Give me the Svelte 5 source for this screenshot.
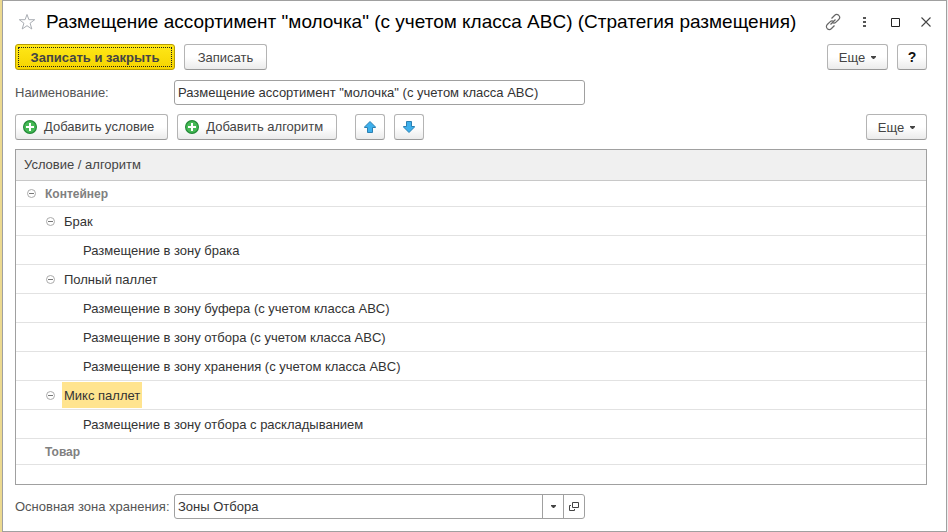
<script>
	let name = $state('Размещение ассортимент "молочка" (с учетом класса ABC)');
	let zone = $state('Зоны Отбора');
	let selected = $state(7);

	let rows = $state([
		{ id: 1, level: 0, text: 'Контейнер', group: true, open: true },
		{ id: 2, level: 1, text: 'Брак', parent: 1, open: true },
		{ id: 3, level: 2, text: 'Размещение в зону брака', parent: 2 },
		{ id: 4, level: 1, text: 'Полный паллет', parent: 1, open: true },
		{ id: 5, level: 2, text: 'Размещение в зону буфера (с учетом класса ABC)', parent: 4 },
		{ id: 6, level: 2, text: 'Размещение в зону отбора (с учетом класса ABC)', parent: 4 },
		{ id: 8, level: 2, text: 'Размещение в зону хранения (с учетом класса ABC)', parent: 4 },
		{ id: 7, level: 1, text: 'Микс паллет', parent: 1, open: true },
		{ id: 9, level: 2, text: 'Размещение в зону отбора с раскладыванием', parent: 7 },
		{ id: 10, level: 0, text: 'Товар', group: true }
	]);

	function isVisible(row) {
		if (!row.parent) return true;
		const parent = rows.find((r) => r.id === row.parent);
		return parent.open && isVisible(parent);
	}
</script>

{#snippet plus()}
	<svg class="plus" width="16" height="16" viewBox="0 0 16 16" aria-hidden="true">
		<circle cx="8" cy="8" r="6.4" fill="#45b955" stroke="#238a38" stroke-width="1.2" />
		<path d="M8 4v8M4 8h8" stroke="#fff" stroke-width="2" />
	</svg>
{/snippet}

{#snippet caret()}
	<svg class="caret" width="5" height="3" viewBox="0 0 5 3" aria-hidden="true">
		<path d="M0 0h5v1L3 3H2L0 1z" fill="#444" />
	</svg>
{/snippet}

<div class="desktop">
	<main class="window">
		<header>
			<button class="icon star" aria-label="В избранное">
				<svg width="18" height="18" viewBox="0 0 18 18">
					<path d="M9 1.5l1.900 5.200h5.800l-4.600 3.500 1.700 5.800L9 12.700 4.200 16l1.700-5.800L1.300 6.700h5.800z" fill="#fff" stroke="#a9adb3" />
				</svg>
			</button>
			<h1>Размещение ассортимент "молочка" (с учетом класса ABC) (Стратегия размещения)</h1>
			<div class="controls">
				<button class="icon" aria-label="Получить ссылку">
					<svg width="18" height="18" viewBox="0 0 18 18" fill="none" stroke="#666" stroke-width="1.2">
						<path d="M7.500 5.500l3-3c1.200-1.200 3-1.200 4.200-.2 1.200 1.200 1.200 3 0 4.200l-2.700 2.700c-1.100 1.100-2.600 1.200-3.700.4" />
						<path d="M10.500 12.500l-3 3c-1.200 1.200-3 1.200-4.200.2-1.200-1.200-1.200-3 0-4.200l2.700-2.700c1.100-1.100 2.600-1.200 3.700-.4" />
						<path d="M6.500 11.500l5-5" />
					</svg>
				</button>
				<button class="icon" aria-label="Меню">
					<svg width="18" height="18" viewBox="0 0 18 18" fill="#555">
						<path d="M8 4h3v2H8zM8 8h3v2H8zM8 12h3v2H8z" />
					</svg>
				</button>
				<button class="icon" aria-label="Развернуть">
					<svg width="18" height="18" viewBox="0 0 18 18">
						<path d="M5.500 5.500h8v8h-8z" fill="none" stroke="#222" />
					</svg>
				</button>
				<button class="icon" aria-label="Закрыть">
					<svg width="18" height="18" viewBox="0 0 18 18">
						<path d="M4.500 4.500l9 9M13.500 4.500l-9 9" stroke="#444" stroke-width="1.100" />
					</svg>
				</button>
			</div>
		</header>

		<div class="content">
			<div class="bar">
				<button class="btn primary">Записать и закрыть</button>
				<button class="btn save">Записать</button>
				<button class="btn more">Еще {@render caret()}</button>
				<button class="btn square help">?</button>
			</div>

			<div class="field name">
				<label for="name">Наименование:</label>
				<input id="name" class="box" type="text" bind:value={name} />
			</div>

			<div class="bar">
				<button class="btn add">{@render plus()}Добавить условие</button>
				<button class="btn add">{@render plus()}Добавить алгоритм</button>
				<div class="arrows">
					<button class="btn square" aria-label="Переместить вверх">
						<svg width="14" height="14" viewBox="0 0 14 14">
							<path d="M7 1.500L12.500 7V7.500H9.500V12.500H4.500V7.500H1.500V7z" fill="#3eb0ec" stroke="#2b80b2" />
						</svg>
					</button>
					<button class="btn square" aria-label="Переместить вниз">
						<svg width="14" height="14" viewBox="0 0 14 14">
							<path d="M7 12.500L12.500 7V6.500H9.500V1.500H4.500V6.500H1.500V7z" fill="#3eb0ec" stroke="#2b80b2" />
						</svg>
					</button>
				</div>
				<button class="btn more">Еще {@render caret()}</button>
			</div>

			<div class="grid">
				<table>
					<thead>
						<tr><th>Условие / алгоритм</th></tr>
					</thead>
					<tbody>
						{#each rows.filter(isVisible) as row (row.id)}
							<tr class:group={row.group} onclick={() => (selected = row.id)}>
								<td>
									<div class="cell level{row.level}">
										{#if row.open !== undefined}
											<button class="toggle" aria-label={row.text} aria-expanded={row.open} onclick={() => (row.open = !row.open)}>
												<svg width="9" height="9" viewBox="0 0 9 9" fill="none">
													<circle cx="4.500" cy="4.500" r="4" stroke="#aaa" />
													<path d={row.open ? 'M2 4.500h5' : 'M2 4.500h5M4.500 2v5'} stroke="#777" />
												</svg>
											</button>
										{/if}
										<span class="text" class:selected={row.id === selected}>{row.text}</span>
									</div>
								</td>
							</tr>
						{/each}
					</tbody>
				</table>
			</div>

			<div class="field">
				<label for="zone">Основная зона хранения:</label>
				<div class="box combo">
					<input id="zone" type="text" bind:value={zone} />
					<button aria-label="Выбрать из списка">{@render caret()}</button>
					<button aria-label="Открыть">
						<svg width="10" height="10" viewBox="0 0 10 10" fill="none" stroke="#444">
							<path d="M3.500.500h6v5h-6z" />
							<path d="M2 3.500H.500v5h5V7" />
						</svg>
					</button>
				</div>
			</div>
		</div>
	</main>
</div>

<style>
	:global(body) {
		margin: 0;
		background: #fff;
	}
	.desktop {
		padding: 0 1px 0 2px;
		background: linear-gradient(to right, #ecd98f 2px, #eee 2px);
		font: 13px/16px 'Liberation Sans', Arial, sans-serif;
		color: #333;
	}
	button,
	input {
		font: inherit;
		color: inherit;
		margin: 0;
		padding: 0;
		box-sizing: border-box;
	}
	.window {
		background: #fff;
		border: 1px solid #a0a0a0;
	}
	header {
		display: flex;
		align-items: center;
		height: 41px;
		padding: 0 11px 2px 15px;
	}
	h1 {
		flex: 1;
		min-width: 0;
		margin: 0 0 0 10px;
		font-size: 19px;
		line-height: 24px;
		font-weight: normal;
		color: #000;
		white-space: nowrap;
	}
	.icon {
		display: flex;
		border: 0;
		background: none;
	}
	.controls {
		display: flex;
		gap: 13px;
	}
	.content {
		display: flex;
		flex-direction: column;
		gap: 9px;
		padding: 0 19px 12px 12px;
	}
	.bar {
		display: flex;
		gap: 9px;
	}
	.btn {
		display: flex;
		align-items: center;
		justify-content: center;
		height: 26px;
		padding: 1px 8px 0;
		border: 1px solid #b4b4b4;
		border-bottom-color: #999;
		border-radius: 3px;
		background: linear-gradient(#fff 50%, #ebebeb);
		color: #444;
		white-space: nowrap;
	}
	.primary {
		width: 160px;
		border-color: #b79d00;
		background: linear-gradient(#ffe818, #f5d400);
		outline: 1px dotted #222;
		outline-offset: -4px;
		font-weight: bold;
	}
	.save {
		width: 83px;
	}
	.more {
		width: 61px;
		gap: 6px;
		margin-left: auto;
	}
	.square {
		width: 30px;
		padding: 0;
	}
	.help {
		font-size: 14px;
		font-weight: bold;
		color: #111;
	}
	.add {
		padding: 0 13px 0 6px;
	}
	.plus {
		margin-right: 6px;
	}
	.caret {
		flex: none;
	}
	.arrows {
		display: flex;
		gap: 9px;
		margin-left: 9px;
	}
	.field {
		display: flex;
		align-items: center;
	}
	.field.name {
		padding-top: 1px;
	}
	.field label {
		width: 159px;
		color: #555;
		white-space: nowrap;
	}
	.box {
		width: 411px;
		height: 25px;
		box-sizing: border-box;
		border: 1px solid #a0a0a0;
		border-radius: 3px;
		background: #fff;
	}
	input {
		padding: 0 3px;
	}
	.combo {
		display: flex;
	}
	.combo input {
		flex: 1;
		min-width: 0;
		border: 0;
		background: none;
	}
	.combo button {
		display: flex;
		align-items: center;
		justify-content: center;
		width: 21px;
		border: 0;
		border-left: 1px solid #a0a0a0;
		background: none;
	}
	.grid {
		border: 1px solid #a0a0a0;
		padding-bottom: 19px;
	}
	table {
		width: 100%;
		border-collapse: separate;
		border-spacing: 0;
	}
	th {
		height: 30px;
		padding: 0 8px;
		border-bottom: 1px solid #c8c8c8;
		background: #f0f0f0;
		font-weight: normal;
		text-align: left;
		color: #444;
	}
	td {
		height: 28px;
		padding: 0;
		border-bottom: 1px solid #e2e2e2;
	}
	.group td {
		height: 25px;
		font-size: 12px;
		font-weight: bold;
		color: #808080;
	}
	.cell {
		display: flex;
		align-items: center;
	}
	.level0 {
		padding-left: 11px;
	}
	.level1 {
		padding-left: 30px;
	}
	.level2 {
		padding-left: 65px;
	}
	.toggle {
		display: flex;
		margin-right: 7px;
		border: 0;
		background: none;
	}
	.text {
		padding: 6px 2px 4px;
	}
	.group .text {
		padding: 4px 2px;
	}
	.level0 .text:first-child {
		margin-left: 16px;
	}
	.selected {
		background: #ffe48f;
	}
</style>
